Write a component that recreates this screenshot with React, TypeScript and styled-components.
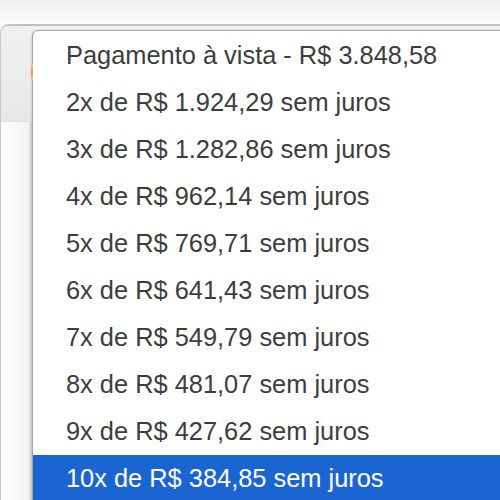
import React from "react"
import styled, { createGlobalStyle } from "styled-components"

const GlobalStyle = createGlobalStyle`
  html, body {
    margin: 0;
    padding: 0;
    width: 500px;
    height: 500px;
    overflow: hidden;
    background: linear-gradient(#f1f1f1, #fbfbfb 24px);
    font-family: "Liberation Sans", Arial, sans-serif;
  }
`

const options = [
  "Pagamento à vista - R$ 3.848,58",
  "2x de R$ 1.924,29 sem juros",
  "3x de R$ 1.282,86 sem juros",
  "4x de R$ 962,14 sem juros",
  "5x de R$ 769,71 sem juros",
  "6x de R$ 641,43 sem juros",
  "7x de R$ 549,79 sem juros",
  "8x de R$ 481,07 sem juros",
  "9x de R$ 427,62 sem juros",
  "10x de R$ 384,85 sem juros",
]

const Page = styled.div`
  position: relative;
  width: 500px;
  height: 500px;
  padding-top: 24px;
  box-sizing: border-box;
`

const Window = styled.div`
  height: 476px;
  display: flex;
  flex-direction: column;
  border-top: 2px solid #b9c3cb;
  border-left: 1px solid #c3c9ce;
  border-top-left-radius: 9px;
  overflow: hidden;
`

const Header = styled.div`
  height: 95px;
  background: linear-gradient(#f0f0f0, #e8e8e8);
  border-bottom: 1px solid #e0e0e0;
`

const Body = styled.div`
  flex: 1;
  background: linear-gradient(90deg, #ffffff, #f4f4f4 27px, #d4d4d4 31px, #ffffff 33px);
`

const Accent = styled.div`
  position: absolute;
  z-index: 2;
  left: 31px;
  top: 64px;
  width: 2px;
  height: 16px;
  background: linear-gradient(#f6c28c, #ee9a45 50%, #f6c28c);
`

const List = styled.ul`
  position: absolute;
  z-index: 1;
  left: 32px;
  top: 30px;
  width: 480px;
  margin: 0;
  padding: 1px 0 0;
  list-style: none;
  background: #ffffff;
  border: 1px solid #a5a5a5;
  border-top-left-radius: 6px;
  box-shadow: -1px 0 2px rgba(0, 0, 0, 0.12);
`

const Item = styled.li<{ $selected?: boolean }>`
  height: 47px;
  line-height: 47px;
  padding-left: 33px;
  font-size: 25.4px;
  white-space: nowrap;
  color: ${p => (p.$selected ? "#ffffff" : "#3d3d3d")};
  background: ${p => (p.$selected ? "#1b65d3" : "transparent")};
`

const App: React.FC = () => {
  return (
    <>
      <GlobalStyle />
      <Page>
        <Window>
          <Header />
          <Body />
        </Window>
        <List>
          {options.map((text, i) => (
            <Item key={text} $selected={i === options.length - 1}>
              {text}
            </Item>
          ))}
        </List>
        <Accent />
      </Page>
    </>
  )
}

export default App
